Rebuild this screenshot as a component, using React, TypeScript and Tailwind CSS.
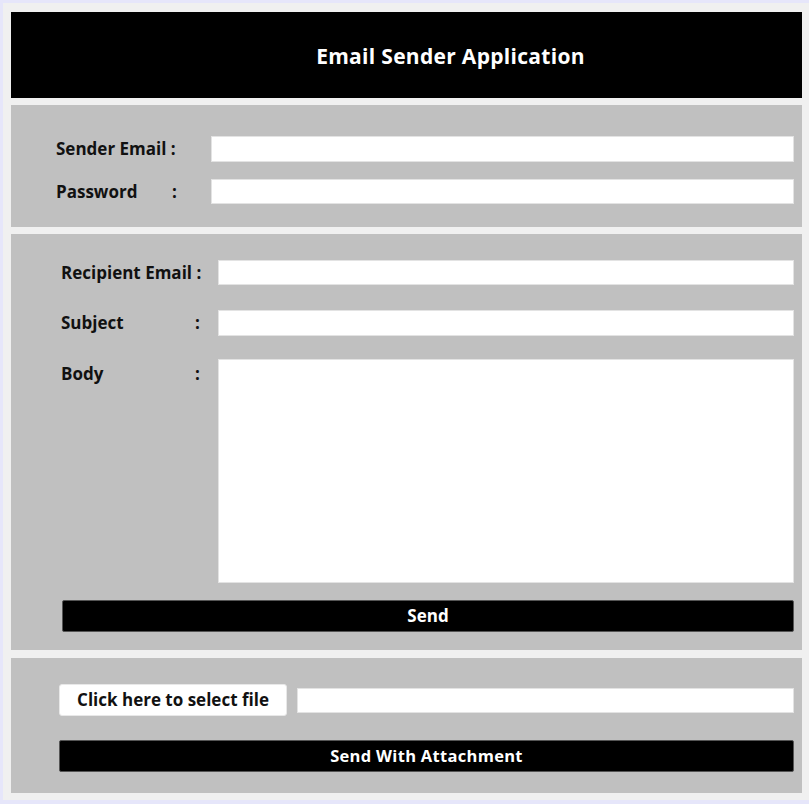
export default function App() {
  const font = { fontFamily: '"Open Sans", "Noto Sans", sans-serif' };
  return (
    <div
      className="w-[809px] h-[804px] bg-[#e6e6fa] pt-[3px] pl-[3px] pb-[4px] overflow-hidden"
      style={font}
    >
      <div className="h-full bg-[#f0f0f0] pt-[9px] pl-[8px] pr-[7px] pb-[7px] flex flex-col">
        {/* header */}
        <div className="h-[86px] bg-black flex items-center justify-center pl-[88px] pt-[3px]">
          <h1 className="text-white font-bold text-[21px] tracking-[0.3px]">
            Email Sender Application
          </h1>
        </div>

        {/* login */}
        <div className="mt-[7px] h-[122px] bg-[#c0c0c0] pt-[31px] pl-[45px] pr-[8px] flex flex-col gap-[17px]">
          <div className="flex items-center h-[26px]">
            <label className="w-[155px] flex text-[17px] font-bold text-[#111]">
              <span>Sender Email :</span>
            </label>
            <input className="flex-1 h-full bg-white border border-[#e3e3e3] outline-none" />
          </div>
          <div className="flex items-center h-[25px]">
            <label className="w-[155px] flex text-[17px] font-bold text-[#111]">
              <span className="w-[116px]">Password</span>
              <span>:</span>
            </label>
            <input
              type="password"
              className="flex-1 h-full bg-white border border-[#e3e3e3] outline-none"
            />
          </div>
        </div>

        {/* message */}
        <div className="mt-[7px] h-[416px] bg-[#c0c0c0] pt-[26px] pl-[50px] pr-[8px] flex flex-col">
          <div className="flex items-center h-[25px]">
            <label className="w-[157px] flex text-[17px] font-bold text-[#111]">
              <span>Recipient Email :</span>
            </label>
            <input className="flex-1 h-full bg-white border border-[#e3e3e3] outline-none" />
          </div>
          <div className="flex items-center h-[26px] mt-[25px]">
            <label className="w-[157px] flex text-[17px] font-bold text-[#111]">
              <span className="w-[134px]">Subject</span>
              <span>:</span>
            </label>
            <input className="flex-1 h-full bg-white border border-[#e3e3e3] outline-none" />
          </div>
          <div className="flex items-start h-[224px] mt-[23px]">
            <label className="w-[157px] flex text-[17px] font-bold text-[#111] pt-[2px]">
              <span className="w-[134px]">Body</span>
              <span>:</span>
            </label>
            <textarea className="flex-1 h-full bg-white border border-[#e3e3e3] outline-none resize-none" />
          </div>
          <button className="mt-[17px] ml-[1px] h-[32px] bg-black border border-[#555] rounded-[2px] text-white font-bold text-[17px]">
            Send
          </button>
        </div>

        {/* attachment */}
        <div className="mt-[8px] h-[135px] bg-[#c0c0c0] pt-[26px] pl-[48px] pr-[8px] flex flex-col">
          <div className="flex items-center h-[32px] gap-[10px]">
            <button className="w-[228px] h-full bg-white rounded-[3px] border border-[#e8e8e8] text-[#111] font-bold text-[17px]">
              Click here to select file
            </button>
            <input className="flex-1 h-[25px] bg-white border border-[#e3e3e3] outline-none" />
          </div>
          <button className="mt-[24px] h-[32px] bg-black border border-[#555] rounded-[2px] text-white font-bold text-[16.5px] tracking-[0.3px]">
            Send With Attachment
          </button>
        </div>
      </div>
    </div>
  );
}
